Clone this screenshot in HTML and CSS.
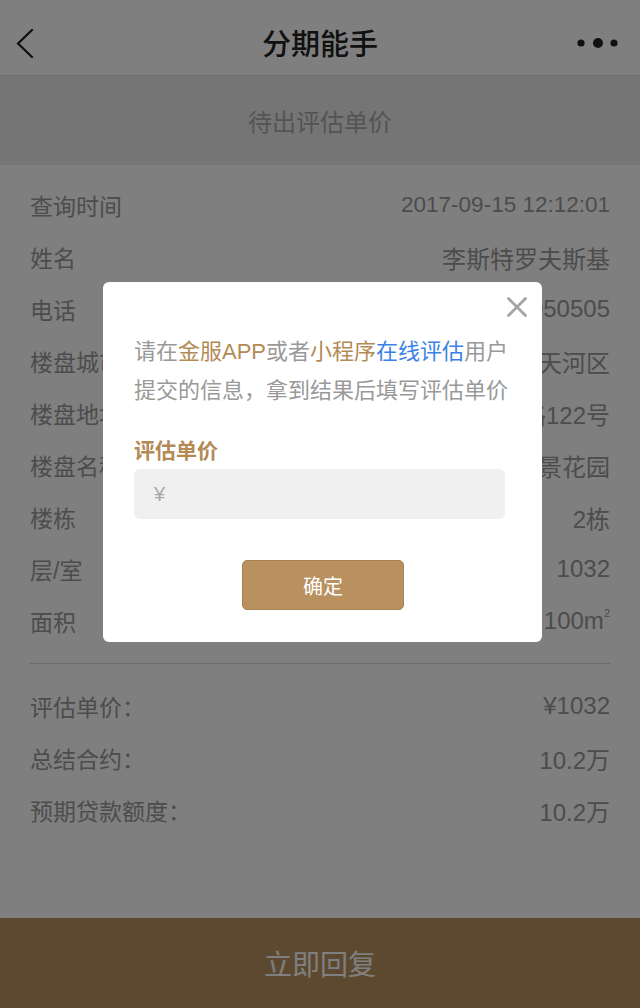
FILE: index.html
```html
<!DOCTYPE html>
<html lang="zh-CN">
<head>
<meta charset="utf-8">
<title>分期能手</title>
<link rel="stylesheet" href="styles.css">
</head>
<body>
<div class="page">
  <header class="nav">
    <svg class="nav-back" width="20" height="30" viewBox="0 0 20 30"><polyline points="16,1 2,14.5 16,28" fill="none" stroke="#222" stroke-width="2.4" stroke-linecap="round" stroke-linejoin="round"/></svg>
    <h1 class="nav-title">分期能手</h1>
    <svg class="nav-more" width="46" height="12" viewBox="0 0 46 12"><circle cx="5" cy="6" r="3.6" fill="#222"/><circle cx="22" cy="6" r="5" fill="#222"/><circle cx="38" cy="6" r="3.6" fill="#222"/></svg>
  </header>
  <div class="status-banner">待出评估单价</div>
  <section class="info">
    <div class="row"><span class="label">查询时间</span><span class="value value-date">2017-09-15 12:12:01</span></div>
    <div class="row"><span class="label">姓名</span><span class="value">李斯特罗夫斯基</span></div>
    <div class="row"><span class="label">电话</span><span class="value">13800050505</span></div>
    <div class="row"><span class="label">楼盘城市</span><span class="value">广东省广州市天河区</span></div>
    <div class="row"><span class="label">楼盘地址</span><span class="value">天河北路122号</span></div>
    <div class="row"><span class="label">楼盘名称</span><span class="value">天河丽景花园</span></div>
    <div class="row"><span class="label">楼栋</span><span class="value">2栋</span></div>
    <div class="row"><span class="label">层/室</span><span class="value">1032</span></div>
    <div class="row"><span class="label">面积</span><span class="value">100m<sup class="sup">2</sup></span></div>
  </section>
  <hr class="divider">
  <section class="info info-result">
    <div class="row"><span class="label">评估单价：</span><span class="value">¥1032</span></div>
    <div class="row"><span class="label">总结合约：</span><span class="value">10.2万</span></div>
    <div class="row"><span class="label">预期贷款额度：</span><span class="value">10.2万</span></div>
  </section>
  <div class="spacer"></div>
  <footer class="reply-bar">立即回复</footer>
</div>

<div class="mask"></div>

<div class="dialog">
  <svg class="dialog-close" width="20" height="20" viewBox="0 0 20 20"><path d="M1.5 1.5 L18.5 18.5 M18.5 1.5 L1.5 18.5" stroke="#a4a4a4" stroke-width="2.8" stroke-linecap="round"/></svg>
  <p class="dialog-text">请在<span class="gold">金服APP</span>或者<span class="gold">小程序</span><span class="blue">在线评估</span>用户提交的信息，拿到结果后填写评估单价</p>
  <div class="dialog-label">评估单价</div>
  <div class="dialog-input"><span class="yen">¥</span></div>
  <div class="dialog-actions"><button class="btn-confirm">确定</button></div>
</div>
</body>
</html>
```

FILE: styles.css
```css
* { box-sizing: border-box; }
html, body { margin: 0; padding: 0; }
body {
  width: 640px;
  height: 1008px;
  overflow: hidden;
  background: #fff;
  font-family: "Liberation Sans", "Noto Sans CJK SC", sans-serif;
  position: relative;
}
.page {
  height: 1008px;
  display: flex;
  flex-direction: column;
}
.nav {
  height: 76px;
  border-bottom: 1px solid #d4d4d4;
  display: flex;
  align-items: center;
  justify-content: space-between;
  padding: 10px 18px 0 16px;
  position: relative;
  background: #fff;
}
.nav-back { display: block; margin-top: 2px; }
.nav-title {
  position: absolute;
  left: 0; right: 0;
  top: 22px;
  margin: 0;
  text-align: center;
  font-size: 29px;
  line-height: 40px;
  font-weight: 500;
  color: #222;
  font-family: "Noto Sans CJK SC", sans-serif;
}
.nav-more { display: block; margin-top: 1px; }
.status-banner {
  height: 89px;
  background: #ebebeb;
  display: flex;
  align-items: center;
  justify-content: center;
  font-size: 24px;
  color: #a9a9a9;
  font-family: "Noto Sans CJK SC", sans-serif;
}
.info {
  padding: 14px 30px 0 30px;
}
.row {
  height: 52px;
  display: flex;
  align-items: center;
  justify-content: space-between;
  font-size: 23px;
  color: #999;
}
.value { font-size: 24px; white-space: nowrap; }
.value-date { font-size: 22.5px; }
.sup { font-size: 11px; vertical-align: 12px; line-height: 0; }
.divider {
  margin: 16px 30px 0 30px;
  border: 0;
  border-top: 1px solid #d5d5d5;
  height: 0;
}
.info-result { padding-top: 16px; }
.spacer { flex: 1; }
.reply-bar {
  height: 90px;
  background: #b8935f;
  color: #fff;
  font-size: 28px;
  display: flex;
  align-items: center;
  justify-content: center;
  font-family: "Noto Sans CJK SC", sans-serif;
}
.mask {
  position: absolute;
  inset: 0;
  background: rgba(0, 0, 0, 0.5);
}
.dialog {
  position: absolute;
  left: 103px;
  top: 282px;
  width: 439px;
  height: 360px;
  background: #fff;
  border-radius: 6px;
  padding: 50px 30px 0 31px;
  font-family: "Liberation Sans", "Noto Sans CJK SC", sans-serif;
}
.dialog-close {
  position: absolute;
  right: 15px;
  top: 15px;
  display: block;
}
.dialog-text {
  margin: 0;
  font-size: 22px;
  line-height: 39px;
  color: #999;
  width: 376px;
}
.gold { color: #b38a55; }
.blue { color: #3b82e6; }
.dialog-label {
  margin-top: 26px;
  font-size: 21px;
  line-height: 30px;
  font-weight: 700;
  color: #b38a55;
}
.dialog-input {
  margin-top: 3px;
  width: 371px;
  height: 50px;
  background: #f0f0f0;
  border-radius: 6px;
  display: flex;
  align-items: center;
  padding-left: 20px;
}
.yen { color: #a8a8a8; font-size: 20px; }
.dialog-actions {
  margin-top: 41px;
  display: flex;
  justify-content: center;
  width: 378px;
}
.btn-confirm {
  width: 162px;
  height: 50px;
  background: #b8915f;
  border: 1px solid #a8834f;
  border-radius: 5px;
  color: #fff;
  font-size: 20px;
  font-family: "Noto Sans CJK SC", sans-serif;
  padding: 0;
}
```
